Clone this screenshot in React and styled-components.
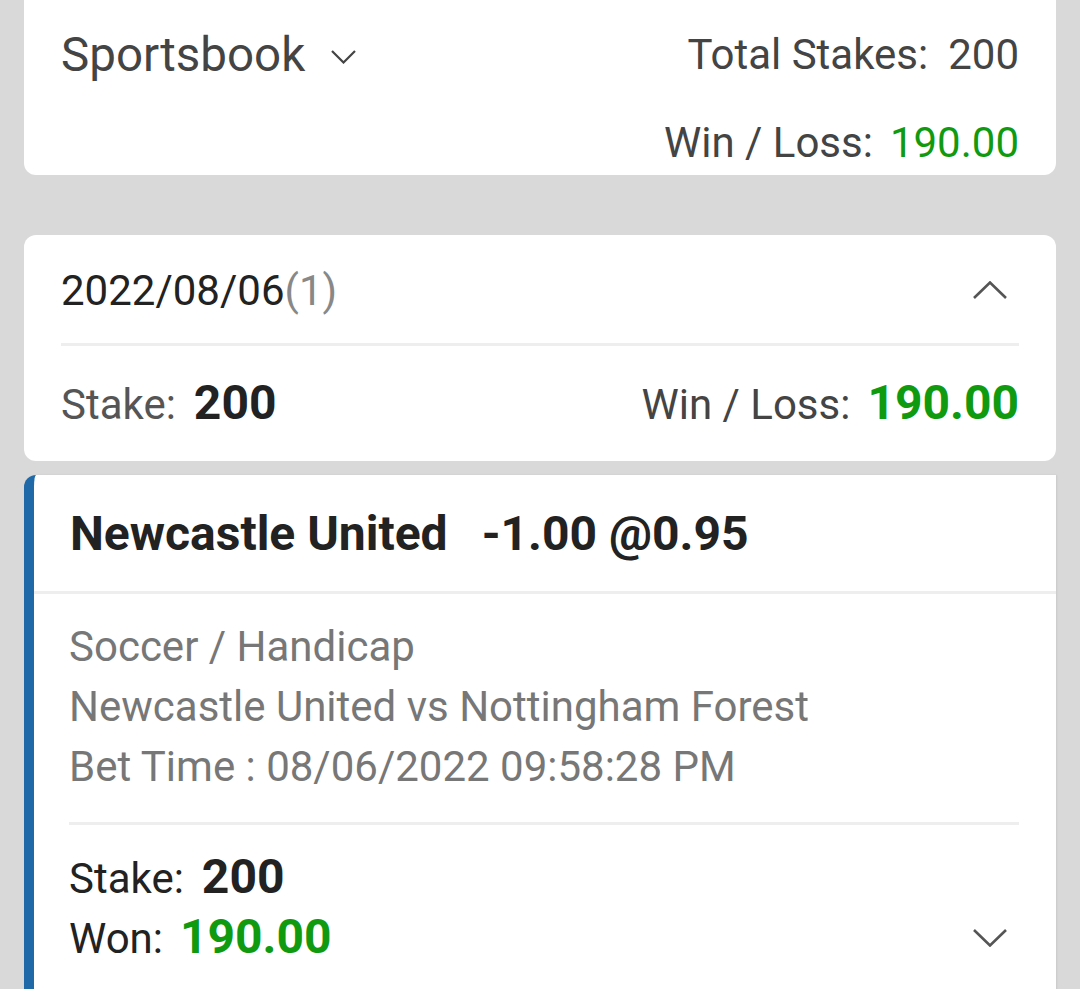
import React from "react";
import styled, { createGlobalStyle } from "styled-components";

const GlobalStyle = createGlobalStyle`
  html, body {
    margin: 0;
    padding: 0;
    background: #d9d9d9;
    font-family: Roboto, "Noto Sans", sans-serif;
  }
  * {
    box-sizing: border-box;
  }
`;

const Page = styled.div`
  padding: 0 24px;
  height: 989px;
  overflow: hidden;
`;

const Card = styled.div`
  background: #fff;
  border-radius: 12px;
`;

const SummaryCard = styled(Card)`
  margin-top: -12px;
  height: 187px;
  padding: 37px 37px 0 37px;
  display: flex;
  justify-content: space-between;
  align-items: flex-start;
`;

const BookTitle = styled.div`
  display: flex;
  align-items: center;
  font-size: 47.5px;
  line-height: 60px;
  color: #444;

  svg {
    margin-left: 26px;
    margin-top: 4px;
  }
`;

const Totals = styled.div`
  display: flex;
  flex-direction: column;
  align-items: flex-end;
  gap: 28px;
`;

const Line = styled.div`
  display: flex;
  align-items: baseline;
  font-size: 42px;
  line-height: 60px;
  color: ${(p) => p.color || "#444"};
  white-space: nowrap;
`;

const Value = styled.span`
  margin-left: ${(p) => p.gap || 18}px;
  font-size: ${(p) => (p.bold ? 48 : 42)}px;
  font-weight: ${(p) => (p.bold ? 700 : 400)};
  color: ${(p) => (p.green ? "#109a10" : p.bold ? "#222" : "#444")};
`;

const DayCard = styled(Card)`
  margin-top: 60px;
  padding: 0 37px;
`;

const DayHeader = styled.div`
  height: 111px;
  display: flex;
  align-items: center;
  justify-content: space-between;
  border-bottom: 3px solid #eeeeee;
  padding-top: 2px;
`;

const DateText = styled.div`
  font-size: 42px;
  color: #222;

  span {
    color: #888;
  }
`;

const DayTotals = styled.div`
  height: 115px;
  display: flex;
  align-items: center;
  justify-content: space-between;
`;

const BetCard = styled.div`
  margin-top: 14px;
  background: #fff;
  border-left: 10px solid #1f69a8;
  border-radius: 12px 0 0 0;
  box-shadow: 1px 0 2px rgba(0, 0, 0, 0.08);
`;

const BetHeader = styled.div`
  height: 119px;
  padding-left: 36px;
  display: flex;
  align-items: center;
  border-bottom: 3px solid #eeeeee;
  font-size: 48px;
  font-weight: 700;
  color: #222;
`;

const Odds = styled.span`
  margin-left: 34px;
`;

const BetBody = styled.div`
  padding: 23px 37px 40px 35px;
`;

const Detail = styled.div`
  font-size: 42px;
  line-height: 60px;
  color: #777;
`;

const BetFooter = styled.div`
  margin-top: 25px;
  padding-top: 23px;
  border-top: 3px solid #eeeeee;
`;

const FooterRow = styled.div`
  display: flex;
  align-items: center;
  justify-content: space-between;
  height: 60px;
`;

const ToggleIcon = styled.span`
  display: flex;
  margin-right: 12px;
`;

const Chevron = ({ up, w = 34, h = 18, stroke = 2.6, color = "#555" }) => (
  <svg width={w} height={h} viewBox={`0 0 ${w} ${h}`}>
    <polyline
      points={
        up
          ? `1,${h - 1} ${w / 2},1.5 ${w - 1},${h - 1}`
          : `1,1 ${w / 2},${h - 1.5} ${w - 1},1`
      }
      fill="none"
      stroke={color}
      strokeWidth={stroke}
    />
  </svg>
);

export default function App() {
  return (
    <>
      <GlobalStyle />
      <Page>
        <SummaryCard>
          <BookTitle>
            Sportsbook
            <Chevron w={25} h={14} stroke={2.2} color="#444" />
          </BookTitle>
          <Totals>
            <Line>
              Total Stakes:<Value gap={20}>200</Value>
            </Line>
            <Line>
              Win / Loss:<Value gap={17} green>190.00</Value>
            </Line>
          </Totals>
        </SummaryCard>

        <DayCard>
          <DayHeader>
            <DateText>
              2022/08/06<span>(1)</span>
            </DateText>
            <ToggleIcon>
              <Chevron up />
            </ToggleIcon>
          </DayHeader>
          <DayTotals>
            <Line color="#555">
              Stake:<Value bold gap={18}>200</Value>
            </Line>
            <Line>
              Win / Loss:<Value bold green gap={17}>190.00</Value>
            </Line>
          </DayTotals>
        </DayCard>

        <BetCard>
          <BetHeader>
            Newcastle United<Odds>-1.00 @0.95</Odds>
          </BetHeader>
          <BetBody>
            <Detail>Soccer / Handicap</Detail>
            <Detail>Newcastle United vs Nottingham Forest</Detail>
            <Detail>Bet Time : 08/06/2022 09:58:28 PM</Detail>
            <BetFooter>
              <FooterRow>
                <Line color="#222">
                  Stake:<Value bold gap={18}>200</Value>
                </Line>
              </FooterRow>
              <FooterRow>
                <Line color="#222">
                  Won:<Value bold green gap={17}>190.00</Value>
                </Line>
                <ToggleIcon>
                  <Chevron />
                </ToggleIcon>
              </FooterRow>
            </BetFooter>
          </BetBody>
        </BetCard>
      </Page>
    </>
  );
}
